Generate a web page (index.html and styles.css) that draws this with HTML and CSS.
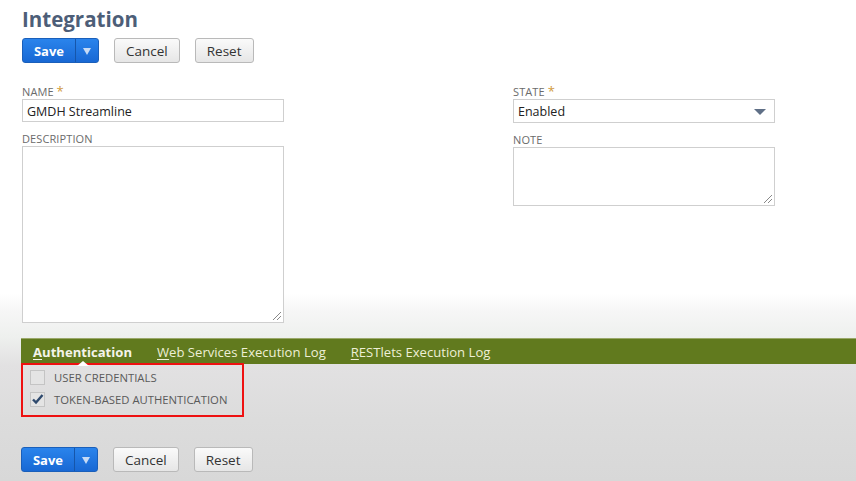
FILE: index.html
```html
<!DOCTYPE html>
<html>
<head>
<meta charset="utf-8">
<link rel="stylesheet" href="styles.css">
</head>
<body>
<div class="page">
  <h1 class="title">Integration</h1>
  <div class="toolbar">
    <div class="btn-save"><span class="save-label">Save</span><span class="save-arrow"><span class="tri"></span></span></div>
    <button class="btn">Cancel</button>
    <button class="btn">Reset</button>
  </div>
  <div class="form">
    <div class="col">
      <div class="label">NAME <span class="req">*</span></div>
      <div class="input">GMDH Streamline</div>
      <div class="label gap">DESCRIPTION</div>
      <div class="textarea tall"><span class="grip"></span></div>
    </div>
    <div class="col">
      <div class="label">STATE <span class="req">*</span></div>
      <div class="input select">Enabled<span class="caret"></span></div>
      <div class="label gap">NOTE</div>
      <div class="textarea short"><span class="grip"></span></div>
    </div>
  </div>
</div>
<div class="tabbar">
  <span class="tab active"><u>A</u>uthentication<span class="pointer"></span></span>
  <span class="tab"><u>W</u>eb Services Execution Log</span>
  <span class="tab"><u>R</u>ESTlets Execution Log</span>
</div>
<div class="tabbody">
  <div class="checks">
    <div class="check"><span class="box"></span>USER CREDENTIALS</div>
    <div class="check"><span class="box"><svg width="13" height="12" viewBox="0 0 13 12"><path d="M2 6.5 L5 9.5 L11.5 2" fill="none" stroke="#2f4a6e" stroke-width="2.4"/></svg></span>TOKEN-BASED AUTHENTICATION</div>
  </div>
  <div class="toolbar bottom">
    <div class="btn-save"><span class="save-label">Save</span><span class="save-arrow"><span class="tri"></span></span></div>
    <button class="btn">Cancel</button>
    <button class="btn">Reset</button>
  </div>
</div>
</body>
</html>
```

FILE: styles.css
```css
html, body {
  margin: 0;
  padding: 0;
  height: 481px;
  overflow: hidden;
}
body {
  font-family: "Open Sans", "Liberation Sans", sans-serif;
  background: linear-gradient(to bottom, #ffffff 0px, #ffffff 294px, #f6f6f6 312px, #eef0ee 337px, #e2e1e2 365px, #dcdcdc 420px, #d8d8d8 481px);
  color: #333;
}
.page {
  padding: 4px 0 0 22px;
}
.title {
  margin: 0;
  font-size: 20.5px;
  font-weight: 700;
  color: #4d5e78;
  line-height: 30px;
  height: 34px;
}
.toolbar {
  display: flex;
  gap: 15px;
  align-items: center;
  height: 25px;
}
.btn-save {
  display: flex;
  height: 25px;
  width: 77px;
  border-radius: 3px;
  background: linear-gradient(#2a84ec, #1868d4);
  border: 1px solid #1a5fba;
  box-sizing: border-box;
  color: #fff;
  font-weight: 700;
  font-size: 13px;
}
.save-label {
  width: 52px;
  display: flex;
  align-items: center;
  justify-content: center;
  border-right: 1px solid #1656aa;
}
.save-arrow {
  flex: 1;
  display: flex;
  align-items: center;
  justify-content: center;
}
.tri {
  width: 0;
  height: 0;
  border-left: 4px solid transparent;
  border-right: 4px solid transparent;
  border-top: 7px solid #c7dbf5;
  margin-top: 1px;
}
.btn {
  height: 25px;
  box-sizing: border-box;
  border: 1px solid #b9b9b9;
  border-radius: 3px;
  background: linear-gradient(#fafafa, #e6e6e6);
  font-family: "Open Sans", "Liberation Sans", sans-serif;
  font-size: 13.5px;
  color: #333;
  padding: 0 11px;
  margin: 0;
}
.form {
  display: grid;
  grid-template-columns: 262px 262px;
  column-gap: 229px;
  margin-top: 21px;
}
.label {
  font-size: 11px;
  color: #6b6b6b;
  line-height: 15px;
  height: 15px;
  letter-spacing: 0.1px;
}
.label.gap {
  margin-top: 9px;
}
.req {
  color: #d19a3c;
  font-size: 13px;
}
.input {
  height: 23px;
  box-sizing: border-box;
  border: 1px solid #cfcfcf;
  background: #fff;
  font-size: 12.5px;
  line-height: 24px;
  padding-left: 4px;
  color: #222;
  position: relative;
}
.select {
  height: 24px;
}
.caret {
  position: absolute;
  right: 8px;
  top: 9px;
  width: 0;
  height: 0;
  border-left: 6px solid transparent;
  border-right: 6px solid transparent;
  border-top: 6px solid #5f6f86;
}
.textarea {
  box-sizing: border-box;
  border: 1px solid #cfcfcf;
  background: #fff;
  position: relative;
}
.tall { height: 177px; }
.short { height: 59px; }
.grip {
  position: absolute;
  right: 2px;
  bottom: 2px;
  width: 8px;
  height: 8px;
  background: linear-gradient(135deg, transparent 0 45%, #888 45% 52%, transparent 52% 70%, #888 70% 77%, transparent 77%);
}
.tabbar {
  margin: 15px 0 0 21px;
  height: 26px;
  background: #617a1e;
  border-top: 1px solid #9aa86a;
  box-sizing: border-box;
  display: flex;
  align-items: center;
  padding-left: 12px;
  gap: 25px;
}
.tab {
  color: #eeefd6;
  font-size: 13.1px;
  position: relative;
  line-height: 24px;
}
.tab u {
  text-decoration-thickness: 1px;
  text-underline-offset: 2px;
}
.tab.active {
  font-weight: 700;
  color: #f4f4ea;
}
.pointer {
  position: absolute;
  left: 44px;
  bottom: -2px;
  width: 0;
  height: 0;
  border-left: 6px solid transparent;
  border-right: 6px solid transparent;
  border-bottom: 5px solid #ffffff;
}
.tabbody {
  padding-left: 21px;
}
.checks {
  width: 223px;
  height: 54px;
  box-sizing: border-box;
  border: 2px solid #ee1111;
  margin-top: -1px;
  padding: 1px 0 0 7px;
}
.check {
  display: flex;
  align-items: center;
  gap: 9px;
  font-size: 11.3px;
  color: #5a5a5a;
  height: 22px;
}
.box {
  width: 15px;
  height: 15px;
  box-sizing: border-box;
  border: 1px solid #c4c4c4;
  background: #e4e4e4;
  display: flex;
  align-items: center;
  justify-content: center;
}
.box svg { display: block; }
.toolbar.bottom {
  margin-top: 30px;
}
```
